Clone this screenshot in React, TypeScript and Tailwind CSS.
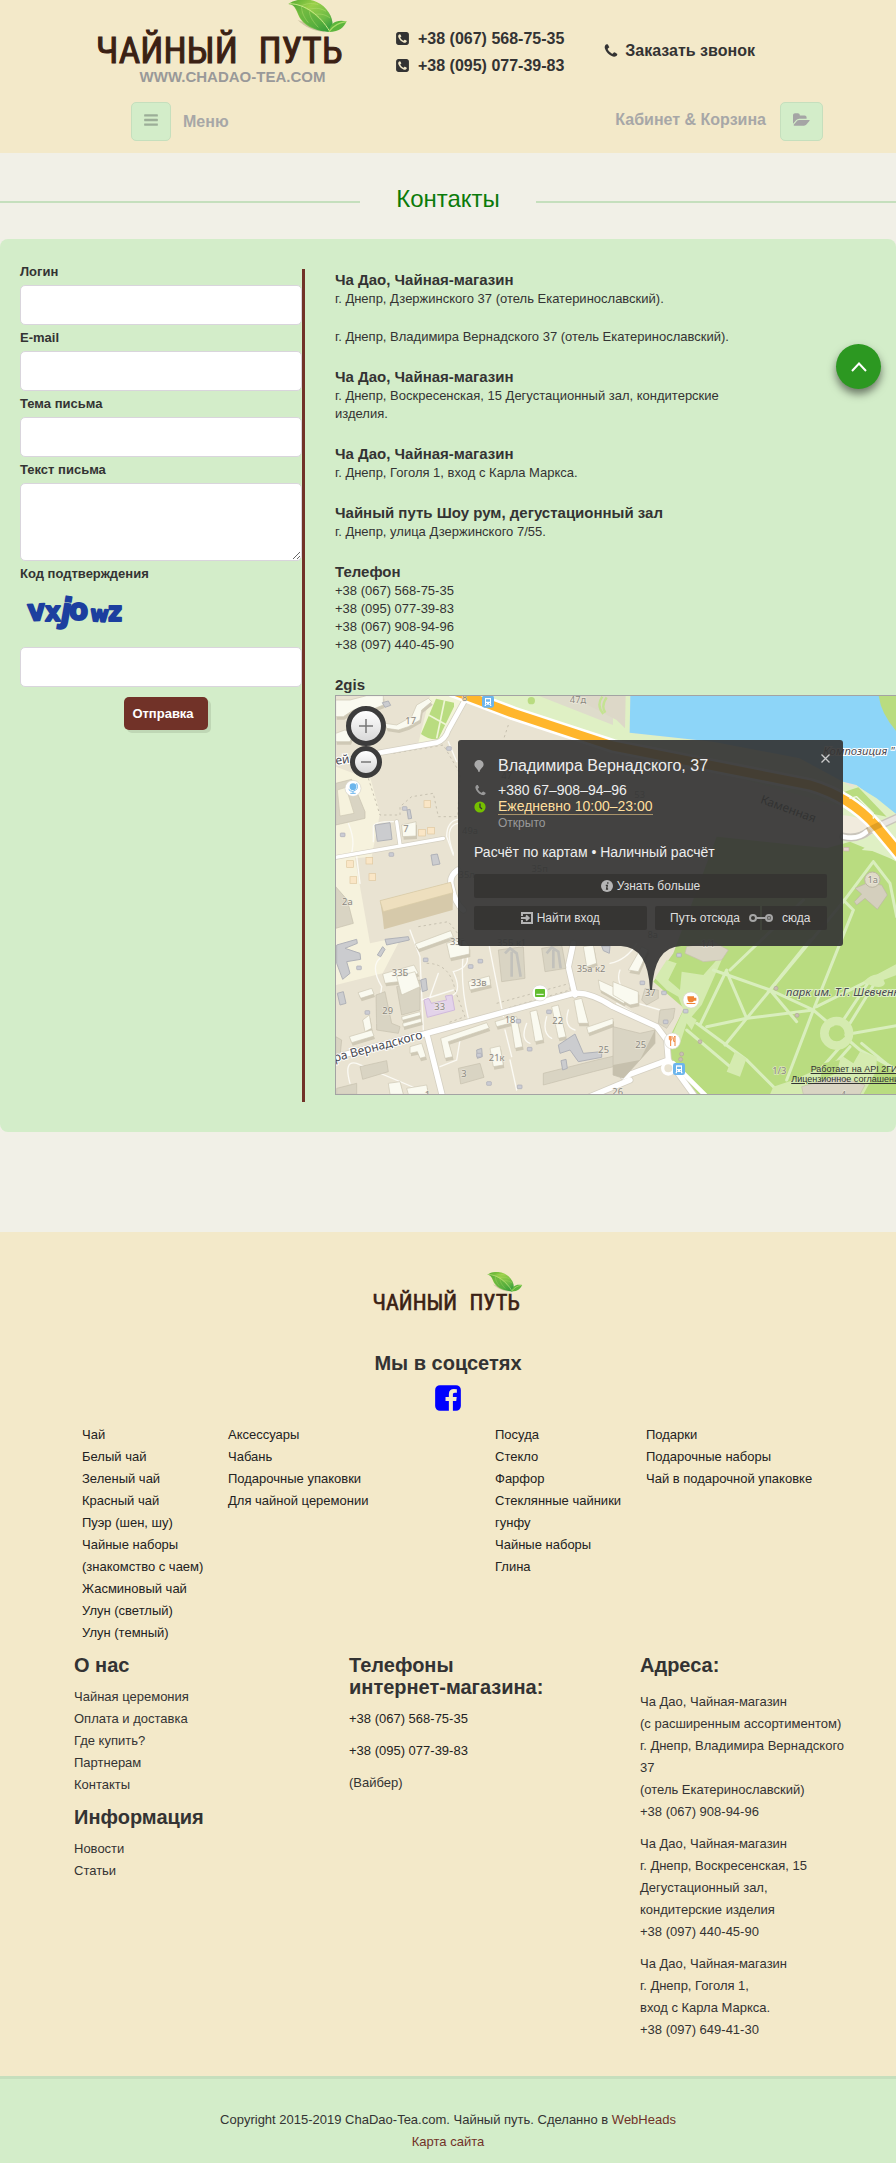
import type { ReactNode } from "react";

const BARS = "M1664 1344v128q0 26-19 45t-45 19h-1408q-26 0-45-19t-19-45v-128q0-26 19-45t45-19h1408q26 0 45 19t19 45zm0-512v128q0 26-19 45t-45 19h-1408q-26 0-45-19t-19-45v-128q0-26 19-45t45-19h1408q26 0 45 19t19 45zm0-512v128q0 26-19 45t-45 19h-1408q-26 0-45-19t-19-45v-128q0-26 19-45t45-19h1408q26 0 45 19t19 45z";
const FOLDER = "M1879 952q0 31-31 66l-336 396q-43 51-120.5 86.5t-143.5 35.5h-1088q-34 0-60.5-13t-26.5-43q0-31 31-66l336-396q43-51 120.5-86.5t143.5-35.5h1088q34 0 60.5 13t26.5 43zm-343-344v160h-832q-94 0-197 47.5t-164 119.5l-337 396-5 6q0-4-.5-12.5t-.5-12.5v-960q0-92 66-158t158-66h320q92 0 158 66t66 158v32h544q92 0 158 66t66 158z";
const PHONE = "M1600 1240q0 27-10 70.5t-21 68.5q-21 50-122 106-94 51-186 51-27 0-53-3.5t-57.5-12.5-47-14.5-55.5-20.5-49-18q-98-35-175-83-127-79-264-216t-216-264q-48-77-83-175-3-9-18-49t-20.5-55.5-14.5-47-12.5-57.5-3.5-53q0-92 51-186 56-101 106-122 25-11 68.5-21t70.5-10q14 0 21 3 18 6 53 76 11 19 30 54t35 63.5 31 53.5q3 4 17.5 25t21.5 35.5 7 28.5q0 20-28.5 50t-62 55-62 53-28.5 46q0 9 5 22.5t8.5 20.5 14 24 11.5 19q76 137 174 235t235 174q2 1 19 11.5t24 14 20.5 8.5 22.5 5q18 0 46-28.5t53-62 55-62 50-28.5q14 0 28.5 7t35.5 21.5 25 17.5q25 15 53.5 31t63.5 35 54 30q70 35 76 53 3 7 3 21z";
const PHONE_SQUARE = "M1408 1193q0-11-2-16t-18-16.5-40.5-25-47.5-26.5-45.5-25-28.5-15q-5-3-19-13t-25-15-21-5q-15 0-36.5 20.5t-39.5 45-38.5 45-33.5 20.5q-7 0-16.5-3.5t-15.5-6.5-17-9.5-14-8.5q-99-55-170-126.5t-127-170.5q-2-3-8.5-14t-9.5-17-6.5-15.5-3.5-16.5q0-13 20.5-33.5t45-38.5 45-39.5 20.5-36.5q0-10-5-21t-15-25-13-19q-3-6-15-28.5t-25-45.5-26.5-47.5-25-40.5-16.5-18-16-2q-48 0-101 22-46 21-80 94.5t-34 130.5q0 16 2.5 34t5 30.5 9 33 10 29.5 12.5 33 11 30q60 164 216.5 320.5t320.5 216.5q6 2 30 11t33 12.5 29.5 10 33 9 30.5 5 34 2.5q57 0 130.5-34t94.5-80q22-53 22-101zm256-777v960q0 119-84.5 203.5t-203.5 84.5h-960q-119 0-203.5-84.5t-84.5-203.5v-960q0-119 84.5-203.5t203.5-84.5h960q119 0 203.5 84.5t84.5 203.5z";
const FACEBOOK = "M1376 128q119 0 203.5 84.5t84.5 203.5v960q0 119-84.5 203.5t-203.5 84.5h-188v-595h199l30-232h-229v-148q0-56 23.5-84t91.5-28l122-1v-207q-63-9-178-9-136 0-217.5 80t-81.5 226v171h-200v232h200v595h-532q-119 0-203.5-84.5t-84.5-203.5v-960q0-119 84.5-203.5t203.5-84.5h960z";

function Icon({ d, className, box = "0 0 1792 1792" }: { d: string; className: string; box?: string }) {
  return (
    <svg viewBox={box} fill="currentColor" className={className} aria-hidden="true">
      <path d={d} />
    </svg>
  );
}

function Logo({ className, id }: { className: string; id: string }) {
  return (
    <svg viewBox="291 0 753 198" className={className} role="img" aria-label="Чайный путь">
      <defs>
        <linearGradient id={id} x1="0" y1="0" x2="1" y2="1">
          <stop offset="0" stopColor="#4fa82e" />
          <stop offset="0.35" stopColor="#9bd04a" />
          <stop offset="0.7" stopColor="#6dbb45" />
          <stop offset="1" stopColor="#1f8f3a" />
        </linearGradient>
      </defs>
      <g
        fontSize="112"
        fontWeight="400"
        fill="#3b2114"
        stroke="#3b2114"
        strokeWidth="3"
        fontFamily="'Liberation Sans Narrow', 'Roboto Condensed', 'Open Sans Condensed', 'DejaVu Sans Condensed', sans-serif"
      >
        <text x="288" y="190">ЧАЙНЫЙ</text>
        <text x="1028" y="190" textAnchor="end">ПУТЬ</text>
      </g>
      <path d="M893 60C915 82 940 92 975 97L960 84Z" fill="#b9ad8c" opacity="0.6" />
      <path d="M865 12C885-4 925-6 950 6C985 22 1000 55 998 80L990 96C955 94 920 84 902 58C890 40 888 12 865 12Z" fill={`url(#${id})`} />
      <path d="M865 12C905 10 950 40 990 96C930 86 905 66 896 44C890 28 885 12 865 12Z" fill="#3f9f35" opacity="0.45" />
      <path d="M868 11C915 12 960 45 989 94" fill="none" stroke="#c9e88a" strokeWidth="3" />
      <path d="M905 17C925 8 940 10 955 14M925 28C950 22 965 26 978 34M946 43C965 40 980 46 990 54M905 20C905 38 912 52 925 68M928 34C930 52 940 66 955 82" fill="none" stroke="#b8df72" strokeWidth="2" opacity="0.7" />
      <path d="M985 96C992 68 1008 58 1040 64C1030 82 1022 96 985 96Z" fill="#5cb53c" />
      <path d="M987 95C1000 76 1016 68 1038 65" fill="none" stroke="#a8dc68" strokeWidth="4" />
    </svg>
  );
}

const buildings: string[] = [
  "17,90 60,90 110,77 160,77 160,105 110,125 70,120 40,140 17,140",
  "17,190 45,180 70,190 60,215 17,215",
  "165,160 200,165 245,140 260,105 295,85 305,95 275,120 270,150 235,170 205,180 170,175",
  "215,465 258,455 258,498 218,500",
  "255,822 362,782 370,800 265,838",
  "350,820 400,805 418,830 418,852 360,865",
  "158,912 252,885 265,910 205,935 165,940",
  "200,920 255,905 270,950 215,975",
  "415,935 478,918 482,945 420,960",
  "84,968 125,955 132,972 92,985",
  "215,1040 270,1025 272,1036 217,1051",
  "218,1060 273,1045 275,1056 220,1071",
  "58,1100 125,1080 132,1098 65,1118",
  "98,1050 118,1035 125,1075 105,1085",
  "332,1105 470,1058 478,1074 355,1115 368,1160 345,1165",
  "480,1135 510,1128 520,1185 490,1190",
  "760,830 790,825 800,880 770,890",
  "805,930 849,950 900,985 880,1000 810,960",
  "540,1040 560,1040 578,1130 555,1135",
  "600,1025 620,1020 640,1110 615,1115",
  "665,1010 685,1005 708,1100 685,1105",
  "732,990 755,985 775,1060 745,1060",
  "770,1072 849,1045 849,1062 775,1090",
  "895,900 935,830 955,840 925,905",
  "849,935 925,965 925,1000 900,1005 849,975",
  "175,1240 210,1235 220,1273 180,1273",
  "230,1255 290,1245 295,1273 235,1273",
  "495,1055 540,1042 548,1058 500,1070",
  "240,1130 275,1120 288,1160 270,1165 262,1145 240,1150",
];
const shadedBuildings: string[] = [
  "17,340 65,328 105,425 105,445 17,465",
  "17,650 52,690 70,760 17,775",
  "200,950 270,930 270,1020 215,1035",
  "90,1190 170,1172 175,1205 98,1228",
  "385,1195 450,1180 462,1222 392,1242",
  "505,840 580,830 585,925 515,935",
  "635,835 695,825 708,895 645,905",
  "640,1210 800,1170 930,1140 930,1170 790,1205 640,1245",
  "945,955 985,960 985,985 950,1005 935,990",
  "990,1020 1035,1015 1030,1045 1010,1075 985,1060",
  "849,1070 930,1090 975,1080 975,1120 880,1225 849,1215",
  "1070,830 1150,815 1195,840 1175,870 1120,875 1065,850",
  "1415,1250 1520,1220 1605,1245 1590,1273 1420,1273",
  "138,975 165,965 185,1060 210,1070 205,1090 140,1080",
  "17,1100 35,1110 30,1160 17,1160",
  "20,1255 80,1240 80,1273 20,1273",
];
const greyBuildings: string[] = [
  "135,465 180,458 186,508 142,514",
  "303,555 322,552 330,582 308,586",
  "231,420 240,418 245,445 235,447",
  "20,825 80,808 82,820 45,835 90,850 92,868 50,875 60,910 38,928 20,880",
  "165,808 235,800 238,810 170,825",
  "158,830 165,838 152,860 142,855",
  "22,970 40,965 48,1000 30,1005",
  "272,930 288,925 292,960 277,965",
  "685,1125 735,1092 760,1150 815,1145 815,1162 745,1175 720,1140 690,1150",
  "157,98 175,93 182,106 165,112",
  "693,1172 708,1168 712,1195 698,1200",
  "815,828 840,828 838,850 820,842",
  "440,1140 455,1135 457,1160 442,1165",
];

function TransitMark({ x, y }: { x: number; y: number }) {
  return (
    <g>
      <rect x={x - 18} y={y - 18} width="36" height="36" rx="7" fill="#6cb5ec" />
      <path d={`M${x - 9} ${y - 11}h18v20h-18z`} fill="#fff" />
      <path d={`M${x - 6} ${y - 7}h12v7h-12zM${x - 6} ${y + 4}h3v3h-3zM${x + 3} ${y + 4}h3v3h-3z`} fill="#6cb5ec" />
      <path d={`M${x - 8} ${y + 9}v4M${x + 8} ${y + 9}v4`} stroke="#fff" strokeWidth="4" />
    </g>
  );
}

const houseNumbers: [number, number, string][] = [
  [242, 161, "17"], [228, 486, "7"], [52, 704, "2а"], [382, 824, "33г"], [210, 917, "33Б"],
  [446, 947, "33в"], [173, 1031, "29"], [329, 1019, "33"], [540, 1058, "18"], [683, 1061, "22"],
  [500, 1172, "21к"], [402, 1222, "3"], [783, 907, "35а к2"], [821, 1150, "25"], [744, 98, "47д"],
  [961, 979, "37"], [932, 1133, "25"], [1348, 1213, "1/3"], [863, 1275, "26"], [1628, 638, "1а"],
  [404, 92, "8"], [1540, 1284, "4"], [292, 1284, "1"], [530, 328, "47"], [420, 491, "49а"],
  [410, 624, "35л"], [629, 606, "35п"], [545, 827, "35Б к1"], [929, 383, "53"], [968, 804, "8а"], [1134, 832, "1/1"],
];

function CityMap() {
  return (
    <svg viewBox="18 78 1713 1194" className="block h-[398px] w-[571px] max-w-none" aria-hidden="true">
      <rect x="0" y="60" width="1760" height="1240" fill="#e9e3d2" />
      <path d="M17 290L70 310L120 320L150 430L125 560L75 565L120 820L215 800L158 910L17 945Z" fill="#f6f2dd" />
      <path d="M300 77L372 77L400 100L340 215L265 220Z" fill="#f2f4d8" />
      <path d="M318 86L372 98L372 110L325 207Q300 212 273 192Z" fill="#b9dc80" />
      <path d="M344 90L320 205M296 135L350 165" stroke="#eef5d5" strokeWidth="5" />
      <path d="M430 77H901L899 188L1149 215L1409 265L1539 335L1740 470V620L1600 520L1540 410L849 220L600 150Z" fill="#dff0c4" />
      <path d="M625 77L849 165L849 77Z" fill="#dedccb" />
      <path d="M720 77L860 150L885 175L887 77Z" fill="#ddd8c8" />
      <path d="M817 80Q798 105 820 132M830 82Q812 108 826 128" fill="none" stroke="#c4e392" strokeWidth="7" />
      <circle cx="604" cy="92" r="11" fill="#b9dc80" />
      <path d="M901 77H1740V450L1698 432L1579 345L1539 335L1409 265L1149 215L899 188Z" fill="#8dd5f8" />
      <path d="M1646 77Q1655 150 1740 225V77Z" fill="#b9dc80" />
      <path d="M1575 345L1640 385L1698 432L1740 445V800H1600L1540 560L1530 400Z" fill="#dff0c4" />
      <path d="M1530 370L1585 352L1670 440L1620 430Z" fill="#b9dc80" />
      <path d="M970 935L1030 850L1160 500L1490 535L1560 515L1740 590V1290H1120L1035 1200L1010 1120L1062 1015Z" fill="#b9dc80" />
      <path d="M1595 540L1650 545L1740 600V560L1640 505Z" fill="#dff0c4" />
      <path d="M975 925L1010 870L1040 880L1015 930L1050 960L1055 905L1120 915L1160 870L1175 870L1115 1005L1085 1040L1100 1050L1085 1080L1070 1060L1050 1120L1020 1110L1060 1020L1045 980L1010 960Z" fill="#d5ebb0" />
      <path d="M1530 435Q1610 440 1640 480Q1600 520 1550 505L1530 480Z" fill="#f1ebdd" />

      <g fill="none" stroke="#d9eebd" strokeLinecap="round" strokeWidth="9">
        <path d="M1630 575L1540 695L1250 1045L1185 1125M1630 575L1680 640L1700 740L1740 790M1540 690L1570 720L1450 1020L1370 1230" />
        <path d="M1150 900L1320 960L1450 1020L1590 1140L1740 1220M1190 905L1250 1045L1450 1020M1320 960L1400 1055M1130 1070L1250 1045" />
        <path d="M1620 930L1540 1050M1640 930L1560 1060M1570 1090L1740 1060M1595 1120L1740 1240M1540 1120L1390 1290M1560 1130L1420 1290" />
        <path d="M1100 1060L1250 1170L1370 1290M1070 1080L1200 1190M1200 900L1420 690M1110 1065L1190 900M1460 1010L1740 870M1315 965L1440 810" />
      </g>
      <path d="M1600 935Q1650 890 1665 940Q1655 965 1600 935ZM1610 930L1740 860V900L1660 930Z" fill="#d5ebb0" />
      <circle cx="1520" cy="1090" r="37" fill="none" stroke="#d5ebb0" strokeWidth="26" />
      <path d="M1500 1075Q1515 1060 1535 1075L1545 1100Q1520 1120 1505 1105Z" fill="#b9dc80" />
      <path d="M1215 1145L1250 1165L1230 1220L1190 1205ZM1330 1250L1390 1230L1480 1190L1540 1160L1570 1180L1590 1145L1640 1160V1200L1600 1273H1320Z" fill="#d5ebb0" />
      <path d="M1480 1180L1530 1170L1520 1210L1470 1230Z" fill="#b9dc80" />

      <g fill="none" stroke="#fbfaf4" strokeLinecap="round" strokeWidth="4">
        <path d="M130 515V470Q130 455 190 455M355 215L380 275M370 555L350 500Q350 455 383 448M55 460Q80 520 60 560M90 640L80 560M405 840Q430 890 370 905Q395 960 370 975M478 830L520 1040M525 1080L545 1160M240 780L270 860L280 1080M60 1240Q40 1170 80 1180L270 1260" />
        <path d="M383 460Q340 470 370 550M150 865Q120 890 155 950L140 1060M275 990L370 960M325 910L300 980M400 850Q390 940 415 1045M330 1190L380 1170L390 1110M540 1170L560 1260M590 1060Q570 1110 600 1120M650 1040Q635 1090 665 1105M715 1020Q700 1070 735 1080" />
        <path d="M840 880Q890 870 920 820M870 900Q850 950 925 1000L990 1020M860 1000L930 1040M849 1160L890 1170" />
      </g>
      <g fill="none" stroke="#c7c1b0" strokeDasharray="7 9" strokeWidth="3">
        <path d="M190 250L340 225L390 310L383 440H325L310 370L245 380L210 410L210 435H150L115 325M265 770L355 755L383 790M535 165L520 210M290 880Q360 880 375 960L405 1040L350 1060M500 1000L720 940V960L530 1015" />
      </g>

      <g fill="none" strokeLinecap="round" strokeLinejoin="round">
        <g stroke="#d5d0c2">
          <path d="M65 267L155 247L320 218Q345 210 355 180L405 90" strokeWidth="19" />
          <path d="M0 565L200 530L340 505M200 455L210 525" strokeWidth="14" />
          <path d="M0 1165L290 1090L730 970Q780 965 849 1010L980 1070L1010 1110L1015 1170M290 1090L340 1290M735 975L715 890L730 820M1015 1170L880 1220M1015 1170L1090 1273M900 1230L780 1280M383 600Q355 620 365 650Q375 700 400 720" strokeWidth="21" />
        </g>
        <g stroke="#fff">
          <path d="M65 267L155 247L320 218Q345 210 355 180L405 90" strokeWidth="14" />
          <path d="M0 565L200 530L340 505M200 455L210 525" strokeWidth="10" />
          <path d="M0 1165L290 1090L730 970Q780 965 849 1010L980 1070L1010 1110L1015 1170M290 1090L340 1290M735 975L715 890L730 820M1015 1170L880 1220M1015 1170L1090 1273M900 1230L780 1280M383 600Q355 620 365 650Q375 700 400 720" strokeWidth="16" />
          <path d="M1030 1180L1130 1280" strokeWidth="14" />
        </g>
        <circle cx="1015" cy="1195" r="17" stroke="#fff" strokeWidth="10" fill="#e9e3d2" />
        <path d="M1540 500Q1585 510 1620 480L1740 425" stroke="#c9c5bb" strokeWidth="24" />
        <path d="M1540 500Q1585 510 1610 485" stroke="#fff" strokeWidth="14" />
        <path d="M1620 480L1740 425" stroke="#e7e5e0" strokeWidth="16" />
        <path d="M370 62L550 130L849 228L1440 345Q1560 380 1640 470L1740 590" stroke="#fff" strokeWidth="42" />
        <path d="M370 62L550 130L849 228L1440 345Q1560 380 1640 470L1740 590" stroke="#ffb62c" strokeWidth="27" />
        <path d="M1612 482L1654 462" stroke="#9a6a10" strokeOpacity="0.3" strokeWidth="18" strokeLinecap="butt" />
        <path d="M1560 385L1580 380L1630 430V445" stroke="#f3f8e7" strokeWidth="4" />
      </g>

      <g fill="#cfc9b6" transform="translate(3 9)">
        {buildings.map((p) => <polygon key={p} points={p} />)}
      </g>
      {shadedBuildings.map((p) => <polygon key={p} points={p} fill="#d9d4c3" stroke="#c6c0ad" strokeWidth="2" />)}
      {buildings.map((p) => <polygon key={p} points={p} fill="#fafaf0" stroke="#cdc7b4" strokeWidth="2" />)}
      {greyBuildings.map((p) => <polygon key={p} points={p} fill="#cbcccf" stroke="#b0b2b8" strokeWidth="3" />)}
      <path d="M525 850L540 835L560 850L572 920M650 850L665 832L685 845L692 895M545 845V920M670 840V895" fill="none" stroke="#c2c1bb" strokeWidth="8" />
      <path d="M930 1170L975 1080L975 1120L880 1225L849 1215V1185Z" fill="#c6c0ad" />
      <path d="M150 692L158 740L162 778L368 720L369 668L362 637Z" fill="#d6c9aa" />
      <path d="M150 692L362 637L369 668L160 725Z" fill="#eedfbe" stroke="#d6c9a5" strokeWidth="2" />
      <path d="M22 360L48 352L72 430L30 438Z" fill="#f6f2dd" stroke="#cdc7b4" strokeWidth="2" />
      <path d="M282 990L296 985L304 1000L350 990L346 978L366 975L374 1020L292 1042Z" fill="#e3d3ea" stroke="#d0b9dc" strokeWidth="3" />
      <path d="M1575 655L1610 640L1655 645L1672 675L1642 718L1605 685L1580 705L1573 695L1595 672Z" fill="#d4cfbd" stroke="#bdb7a4" strokeWidth="2" />
      <circle cx="1627" cy="629" r="23" fill="#dfdac8" stroke="#bdb7a4" strokeWidth="3" />
      {[[282, 392], [266, 478], [293, 472], [50, 572], [108, 562], [60, 620], [117, 611]].map(([x, y]) => (
        <rect key={`${x}-${y}`} x={x} y={y} width="20" height="20" fill="#fae6c6" stroke="#e0c8a0" strokeWidth="2" />
      ))}
      {[[31, 489], [350, 230], [217, 410], [177, 548], [280, 864], [415, 884], [444, 868], [80, 888], [105, 1022], [592, 1132], [440, 1150], [470, 1235], [562, 1245], [558, 1048], [650, 1020], [930, 933], [995, 963], [1040, 850], [1060, 1018], [1000, 1050]].map(([x, y]) => (
        <rect key={`${x}-${y}`} x={x} y={y} width="14" height="11" rx="2" fill="#cbccd4" stroke="#a9abb5" strokeWidth="2" />
      ))}
      {[[1338, 955], [1401, 1036], [1110, 1115], [1055, 1152], [1052, 1168]].map(([x, y]) => (
        <circle key={`${x}-${y}`} cx={x} cy={y} r="6" fill="#c9bfb2" stroke="#b1a69b" strokeWidth="2" />
      ))}
      <rect x="1541" y="532" width="16" height="11" fill="#e6d6cd" stroke="#c9b5ab" strokeWidth="2" />

      <g fontFamily="'Noto Sans', sans-serif" fontSize="28" fill="#8b8880" textAnchor="middle" stroke="#f4f0e6" strokeOpacity="0.6" strokeWidth="4" paintOrder="stroke">
        {houseNumbers.map(([x, y, t]) => <text key={`${x}-${y}`} x={x} y={y}>{t}</text>)}
      </g>
      <g fontFamily="'Noto Sans', sans-serif" fontSize="36" fill="#4a4a52" stroke="#fff" strokeWidth="6" paintOrder="stroke">
        <text transform="translate(14 1176) rotate(-15)">ра Вернадского</text>
        <text transform="translate(18 284) rotate(-8)">ей</text>
        <text x="1480" y="256" fontStyle="italic" fontSize="34">Композиция "</text>
        <text x="1368" y="978" fontStyle="italic" fontSize="34" stroke="#dff0c4">парк им. Т.Г. Шевченко</text>
      </g>
      <text transform="translate(1289 398) rotate(20)" fontFamily="'Noto Sans', sans-serif" fontSize="36" fill="#222">Каменная</text>

      <TransitMark x={474} y={95} />
      <TransitMark x={1047} y={1197} />
      <g fill="#fff" stroke="#d8d4c8" strokeWidth="2">
        <circle cx="69" cy="355" r="24" />
        <circle cx="630" cy="969" r="24" />
        <circle cx="1083" cy="990" r="24" />
        <circle cx="1027" cy="1113" r="24" />
      </g>
      <circle cx="69" cy="350" r="10" fill="#6cb5ec" />
      <path d="M80 340Q88 360 68 364Q60 364 56 358M69 364V370M61 370H77" fill="none" stroke="#6cb5ec" strokeWidth="3" />
      <rect x="615" y="957" width="30" height="24" rx="3" fill="#62bd2f" />
      <path d="M619 973H641" stroke="#fff" strokeWidth="3" />
      <path d="M1072 979H1092V983H1099V992H1092Q1090 996 1086 997H1078Q1072 994 1072 979ZM1070 999H1096V1002H1070Z" fill="#f08436" />
      <path d="M1018 1098V1108Q1020 1112 1022 1112V1128M1026 1098V1108L1022 1112M1022 1098V1112M1035 1128V1098Q1030 1100 1031 1114H1035" fill="none" stroke="#f08436" strokeWidth="3" />
    </svg>
  );
}

function Popup() {
  const pill = "flex h-6 items-center justify-center bg-[#353432]/90 text-[12px] leading-6 text-[#dedede]";
  return (
    <div className="absolute left-[122px] top-[44px] w-[385px]">
      <div className="rounded-[3px] bg-[#343434]/92 p-4 text-[#eeeeee]">
        <div className="flex items-start justify-between">
          <div className="grid grid-cols-[24px_auto] items-center">
            <svg viewBox="0 0 10 12" className="h-3 w-[10px]" fill="#aaa" aria-hidden="true"><path d="M5 0a4.6 4.6 0 0 1 4.6 4.5C9.6 7.5 6 8.500 5.500 12h-1C4 8.500 .4 7.500 .4 4.500A4.600 4.600 0 0 1 5 0z" /></svg>
            <h4 className="text-[16px] leading-5">Владимира Вернадского, 37</h4>
            <Icon d={PHONE} className="mt-[6px] size-[13px] text-[#999]" />
            <a href="#phone" className="mt-[6px] text-[14px] leading-4">+380 67–908–94–96</a>
            <svg viewBox="0 0 12 12" className="size-3" aria-hidden="true"><circle cx="6" cy="6" r="5.600" fill="#75bf00" /><path d="M6 2.500V6.300L8 8" stroke="#333" strokeWidth="1.300" fill="none" /></svg>
            <a href="#hours" className="justify-self-start border-b border-[#a8936a] text-[14px] leading-4 text-[#ffdf9e]">Ежедневно 10:00–23:00</a>
            <span />
            <span className="text-[12px] leading-4 text-[#999]">Открыто</span>
          </div>
          <button type="button" aria-label="Закрыть" className="-mr-1.5 -mt-1.5 flex size-4 items-center justify-center">
            <svg viewBox="0 0 9 9" className="size-[9px]" stroke="#ccc" strokeWidth="1.300"><path d="M.5 .5l8 8M8.500 .5l-8 8" /></svg>
          </button>
        </div>
        <p className="mt-[11px] text-[14px] leading-5">Расчёт по картам • Наличный расчёт</p>
        <button type="button" className={`${pill} mt-3 w-full gap-1 rounded-[2px]`}>
          <svg viewBox="0 0 12 12" className="size-3" aria-hidden="true"><circle cx="6" cy="6" r="6" fill="#b5b5b5" /><path d="M6.800 2.300v1.400M4.800 5.300h1.500L5.600 9h1.500" stroke="#353432" strokeWidth="1.300" fill="none" /></svg>
          Узнать больше
        </button>
        <div className="mt-2 grid grid-cols-2 gap-2">
          <button type="button" className={`${pill} gap-1 rounded-[2px]`}>
            <svg viewBox="0 0 12 12" className="size-3" fill="none" stroke="#b5b5b5" strokeWidth="2" aria-hidden="true"><path d="M1 4V1h10v10H1V8M0 6h7.500M5 3.500L7.700 6L5 8.500" /></svg>
            Найти вход
          </button>
          <div className="relative grid grid-cols-[105px_1fr] gap-[2px]">
            <button type="button" className={`${pill} rounded-l-[2px] pr-1`}>Путь отсюда</button>
            <button type="button" className={`${pill} rounded-r-[2px] pl-1`}>сюда</button>
            <svg viewBox="0 0 24 8" className="absolute left-[94px] top-2 h-2 w-6" fill="none" stroke="#a5a5a5" strokeWidth="2" aria-hidden="true"><circle cx="4" cy="4" r="3" /><circle cx="20" cy="4" r="3" /><circle cx="20" cy="4" r=".5" /><path d="M7 4h10" /></svg>
          </div>
        </div>
      </div>
      <svg viewBox="0 0 60 44" className="mx-auto block h-11 w-[60px]" aria-hidden="true"><path d="M0 0H60Q33 1 31 44H29Q27 1 0 0Z" fill="#343434" fillOpacity=".92" /></svg>
    </div>
  );
}

function Field({ id, label, type = "text" }: { id: string; label: string; type?: string }) {
  return (
    <div>
      <label htmlFor={id} className="block text-[13px] font-bold leading-[26px]">{label}</label>
      <input id={id} type={type} className="block h-10 w-full rounded-[5px] border border-[#d9d5dc] bg-white px-3" />
    </div>
  );
}

function Place({ title, children }: { title: string; children: ReactNode }) {
  return (
    <section className="mb-5">
      <h3 className="text-[15px] font-bold leading-[21px]">{title}</h3>
      <div className="flex max-w-[400px] flex-col gap-5">{children}</div>
    </section>
  );
}

const catalog = [
  ["Чай", "Белый чай", "Зеленый чай", "Красный чай", "Пуэр (шен, шу)", "Чайные наборы (знакомство с чаем)", "Жасминовый чай", "Улун (светлый)", "Улун (темный)"],
  ["Аксессуары", "Чабань", "Подарочные упаковки", "Для чайной церемонии"],
  ["Посуда", "Стекло", "Фарфор", "Стеклянные чайники гунфу", "Чайные наборы", "Глина"],
  ["Подарки", "Подарочные наборы", "Чай в подарочной упаковке"],
];

const addresses = [
  ["Ча Дао, Чайная-магазин", "(с расширенным ассортиментом)", "г. Днепр, Владимира Вернадского 37", "(отель Екатеринославский)", "+38 (067) 908-94-96"],
  ["Ча Дао, Чайная-магазин", "г. Днепр, Воскресенская, 15", "Дегустационный зал,", "кондитерские изделия", "+38 (097) 440-45-90"],
  ["Ча Дао, Чайная-магазин", "г. Днепр, Гоголя 1,", "вход с Карла Маркса.", "+38 (097) 649-41-30"],
];

function Links({ items, className }: { items: string[]; className?: string }) {
  return (
    <ul className={className}>
      {items.map((t) => <li key={t}><a href="#page">{t}</a></li>)}
    </ul>
  );
}

export default function App() {
  const square = "flex h-[39px] items-center justify-center rounded-[5px] border border-[#c5dfbd] bg-[#d3edc9] pb-1 text-[#9cae98]";
  return (
    <div className="relative overflow-hidden bg-[#f1f0e7] font-['Liberation_Sans',Arial,sans-serif] text-[13px] leading-[18px] text-[#333333]">
      <header className="bg-[#f3e9c9] pb-3">
        <div className="flex h-[102px] items-start pl-[97px] font-bold">
          <a href="#home" className="flex w-[251px] flex-col items-center">
            <Logo id="leaf-top" className="block h-[66px] w-[251px]" />
            <span className="-mt-px pl-5 text-[15px] leading-6 text-[#999999]">WWW.CHADAO-TEA.COM</span>
          </a>
          <div className="ml-[47px] mt-[25px] text-[16px] leading-[27px]">
            {["+38 (067) 568-75-35", "+38 (095) 077-39-83"].map((n) => (
              <a key={n} href="#call" className="flex items-center gap-2">
                <Icon d={PHONE_SQUARE} className="size-[15px]" />
                {n}
              </a>
            ))}
          </div>
          <a href="#callback" className="ml-[39px] mt-[37px] flex items-center gap-[6px] text-[16px] leading-[27px]">
            <Icon d={PHONE} className="size-4" />
            Заказать звонок
          </a>
        </div>
        <div className="flex justify-between pl-[131px] pr-[73px] text-[16px] font-bold text-[#a7a7a7]">
          <div className="flex items-center gap-3">
            <button type="button" aria-label="Открыть меню" className={`${square} w-10`}><Icon d={BARS} className="size-4" /></button>
            <span>Меню</span>
          </div>
          <div className="flex items-center gap-[14px]">
            <span className="pb-1">Кабинет &amp; Корзина</span>
            <button type="button" aria-label="Открыть корзину" className={`${square} w-[43px] text-[#a5a5a5]`}><Icon d={FOLDER} box="0 0 1920 1792" className="h-4 w-[17px]" /></button>
          </div>
        </div>
      </header>

      <div className="flex h-[86px] items-center gap-9 pt-3">
        <span className="h-[2px] flex-1 bg-[#c5dfbd]" />
        <h1 className="pb-[6px] text-[24px] leading-7 text-[#0b7b0b]">Контакты</h1>
        <span className="h-[2px] flex-1 bg-[#c5dfbd]" />
      </div>

      <main className="flex rounded-[8px] bg-[#d3edc9] pb-[30px] pl-5 pt-5">
        <form className="w-[282px] shrink-0" onSubmit={(e) => e.preventDefault()}>
          <Field id="login" label="Логин" />
          <Field id="email" label="E-mail" type="email" />
          <Field id="subject" label="Тема письма" />
          <label htmlFor="message" className="block font-bold leading-[26px]">Текст письма</label>
          <textarea id="message" className="block h-[78px] w-full rounded-[5px] border border-[#d9d5dc] bg-white px-3" />
          <label htmlFor="captcha" className="block font-bold leading-[26px]">Код подтверждения</label>
          <svg viewBox="0 0 120 50" className="mb-[10px] block h-[50px] w-[120px]" role="img" aria-label="vxjowz">
            <g fill="#1c3f9f" stroke="#1c3f9f" strokeWidth="1.800" strokeLinejoin="round" fontFamily="'DejaVu Sans Condensed', 'DejaVu Sans', sans-serif" fontWeight="bold">
              <text x="8" y="34" fontSize="30" transform="rotate(-3 8 34)">v</text>
              <text x="25" y="34" fontSize="27">x</text>
              <text x="40" y="35" fontSize="34" transform="rotate(10 44 30)">j</text>
              <text x="49" y="33" fontSize="31">o</text>
              <text x="70" y="34" fontSize="22" transform="rotate(3 70 34)">w</text>
              <text x="88" y="34" fontSize="27">z</text>
            </g>
          </svg>
          <input id="captcha" type="text" className="block h-10 w-full rounded-[5px] border border-[#d9d5dc] bg-white px-3" />
          <button type="submit" className="ml-[104px] mt-[10px] block h-[33px] w-[84px] rounded-[5px] bg-[#713228] pr-[6px] font-bold text-white shadow-[3px_3px_0_#bfd7b5]">Отправка</button>
        </form>

        <div className="mt-[10px] min-w-0 flex-1 border-l-[3px] border-[#713228] pb-[7px] pl-[30px]">
          <Place title="Ча Дао, Чайная-магазин">
            <p>г. Днепр, Дзержинского 37 (отель Екатеринославский).</p>
            <p>г. Днепр, Владимира Вернадского 37 (отель Екатеринославский).</p>
          </Place>
          <Place title="Ча Дао, Чайная-магазин">
            <p>г. Днепр, Воскресенская, 15 Дегустационный зал, кондитерские изделия.</p>
          </Place>
          <Place title="Ча Дао, Чайная-магазин">
            <p>г. Днепр, Гоголя 1, вход с Карла Маркса.</p>
          </Place>
          <Place title="Чайный путь Шоу рум, дегустационный зал">
            <p>г. Днепр, улица Дзержинского 7/55.</p>
          </Place>
          <Place title="Телефон">
            <p>+38 (067) 568-75-35<br />+38 (095) 077-39-83<br />+38 (067) 908-94-96<br />+38 (097) 440-45-90</p>
          </Place>
          <h3 className="text-[15px] font-bold leading-[21px]">2gis</h3>
          <div className="relative overflow-hidden border-y border-l border-[#a3a3a3]">
            <CityMap />
            <div className="absolute left-[10px] top-[10px] flex flex-col items-center">
              <button type="button" aria-label="Приблизить" className="flex size-10 items-center justify-center rounded-full border-[5px] border-[#3c3c3c] bg-linear-to-b from-white to-[#d9d9d9]">
                <svg viewBox="0 0 14 14" className="size-[14px]" stroke="#777" strokeWidth="1.500"><path d="M7 0V14M0 7H14" /></svg>
              </button>
              <button type="button" aria-label="Отдалить" className="flex size-8 items-center justify-center rounded-full border-[5px] border-[#3c3c3c] bg-linear-to-b from-white to-[#d9d9d9]">
                <svg viewBox="0 0 10 10" className="size-[10px]" stroke="#777" strokeWidth="1.500"><path d="M0 5H10" /></svg>
              </button>
            </div>
            <Popup />
            <div className="absolute bottom-[10px] left-[454px] flex w-[114px] flex-col items-end whitespace-nowrap text-[9px] leading-[10px] text-[#333]">
              <a href="#api" className="underline">Работает на API 2ГИС</a>
              <a href="#license" className="underline">Лицензионное соглашение</a>
            </div>
          </div>
        </div>
      </main>

      <a href="#top" aria-label="Наверх" className="absolute right-[15px] top-[344px] flex size-[45px] items-center justify-center rounded-full bg-[#2c9821] shadow-[0_5px_9px_rgba(0,0,0,0.5)]">
        <svg viewBox="0 0 16 10" className="h-[10px] w-4" fill="none" stroke="#fff" strokeWidth="2"><path d="M1 9L8 1.500L15 9" /></svg>
      </a>

      <footer className="mt-[100px]">
        <div className="bg-[#f3e9c9] pb-[35px] pt-10">
          <Logo id="leaf-bottom" className="mx-auto block h-10 w-[150px]" />
          <h2 className="mt-10 text-center text-[20px] font-bold leading-[22px]">Мы в соцсетях</h2>
          <a href="#facebook" aria-label="Facebook" className="mx-auto mt-[9px] block size-[30px] text-[#0000ff]"><Icon d={FACEBOOK} className="block size-[30px]" /></a>
          <nav className="mt-[11px] grid grid-cols-[146fr_267fr_151fr_250fr] pl-[82px] leading-[22px] text-[#222222]">
            {catalog.map((list) => <Links key={list[0]} items={list} />)}
          </nav>
          <div className="mt-[10px] grid grid-cols-[275fr_291fr_256fr] pl-[74px] leading-[22px]">
            <div>
              <h2 className="mb-[10px] text-[20px] font-bold">О нас</h2>
              <Links items={["Чайная церемония", "Оплата и доставка", "Где купить?", "Партнерам", "Контакты"]} />
              <h2 className="my-[10px] text-[20px] font-bold">Информация</h2>
              <Links items={["Новости", "Статьи"]} />
            </div>
            <div className="flex flex-col gap-[10px]">
              <h2 className="text-[20px] font-bold">Телефоны<br />интернет-магазина:</h2>
              <a href="#call" className="text-[#222222]">+38 (067) 568-75-35</a>
              <a href="#call" className="text-[#222222]">+38 (095) 077-39-83</a>
              <p>(Вайбер)</p>
            </div>
            <div className="pr-10">
              <h2 className="mb-[15px] text-[20px] font-bold">Адреса:</h2>
              <div className="flex flex-col gap-[10px]">
                {addresses.map((a) => (
                  <address key={a[1]} className="not-italic">
                    {a.map((line) => <span key={line} className="block">{line}</span>)}
                  </address>
                ))}
              </div>
            </div>
          </div>
        </div>
        <div className="border-t-[3px] border-[#c5dfbd] bg-[#d3edc9] pb-[10px] pt-[30px] text-center leading-[22px]">
          <p>Copyright 2015-2019 ChaDao-Tea.com. Чайный путь. Сделанно в <a href="#webheads" className="text-[#713228]">WebHeads</a></p>
          <a href="#sitemap" className="text-[#713228]">Карта сайта</a>
        </div>
      </footer>
    </div>
  );
}
